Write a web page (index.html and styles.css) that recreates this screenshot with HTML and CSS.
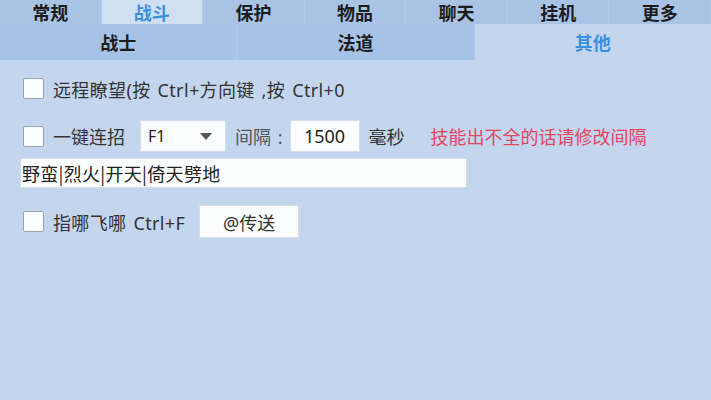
FILE: index.html
```html
<!DOCTYPE html>
<html lang="zh">
<head>
<meta charset="utf-8">
<link rel="stylesheet" href="styles.css">
</head>
<body>
<div class="tabs">
  <div class="tab">常规</div>
  <div class="tab active">战斗</div>
  <div class="tab">保护</div>
  <div class="tab">物品</div>
  <div class="tab">聊天</div>
  <div class="tab">挂机</div>
  <div class="tab">更多</div>
</div>
<div class="subtabs">
  <div class="subtab">战士</div>
  <div class="subtab">法道</div>
  <div class="subtab active">其他</div>
</div>
<div class="panel">
  <div class="row row1">
    <span class="check"></span>
    <span class="label">远程瞭望(按 Ctrl+方向键 ,按 Ctrl+0</span>
  </div>
  <div class="row row2">
    <span class="check"></span>
    <span class="label">一键连招</span>
    <div class="select"><span>F1</span><span class="caret"></span></div>
    <span class="label gray">间隔 :</span>
    <div class="field num">1500</div>
    <span class="label">毫秒</span>
    <span class="warn">技能出不全的话请修改间隔</span>
  </div>
  <div class="row row3">
    <div class="field wide">野蛮|烈火|开天|倚天劈地</div>
  </div>
  <div class="row row4">
    <span class="check"></span>
    <span class="label">指哪飞哪 Ctrl+F</span>
    <div class="btn">@传送</div>
  </div>
</div>
</body>
</html>
```
FILE: styles.css
```css
* { box-sizing: border-box; }
html, body {
  margin: 0;
  height: 100%;
}
body {
  background: #c3d6ee;
  font-family: "Noto Sans", "Noto Sans CJK SC", sans-serif;
  color: #333;
  overflow: hidden;
}
.tabs {
  display: flex;
  height: 24px;
  background: #a9c3e4;
}
.tab {
  flex: 1;
  display: flex;
  align-items: center;
  justify-content: center;
  font-family: "Noto Sans CJK SC", sans-serif;
  font-size: 18px;
  font-weight: bold;
  color: #1c1c1c;
  border-right: 1px solid #b3cae8;
}
.tab.active {
  background: #d0e0f2;
  color: #3d8fe0;
}
.subtabs {
  display: flex;
  height: 36px;
}
.subtab {
  flex: 1;
  display: flex;
  align-items: center;
  justify-content: center;
  background: #a6c2e6;
  font-family: "Noto Sans CJK SC", sans-serif;
  font-size: 18px;
  font-weight: bold;
  color: #1c1c1c;
  border-right: 1px solid #b2c9e8;
}
.subtab.active {
  background: #c3d6ee;
  color: #3d8fe0;
  border-right: 0;
}
.panel {
  padding: 18px 0 0 20px;
  display: flex;
  flex-direction: column;
}
.row {
  display: flex;
  align-items: center;
}
.row1 { height: 21px; }
.row2 { height: 32px; margin-top: 21px; }
.row3 { height: 30px; margin-top: 6px; }
.row4 { height: 33px; margin-top: 17px; }
.check {
  width: 21px;
  height: 21px;
  margin-left: 3px;
  margin-right: 9px;
  background: #fbfcfe;
  border: 1px solid #9aa3b0;
  border-radius: 2px;
  flex: none;
}
.label {
  font-size: 18px;
  color: #333;
  white-space: nowrap;
  word-spacing: 2px;
  letter-spacing: 0.35px;
}
.row2 .label { letter-spacing: 0; }
.label.gray { color: #505560; }
.select {
  width: 86px;
  height: 32px;
  margin-left: 15px;
  margin-right: 9px;
  background: #fbfcfe;
  border: 1px solid #d4dde8;
  display: flex;
  align-items: center;
  justify-content: space-between;
  padding: 0 13px 0 7px;
  font-size: 16px;
  color: #222;
}
.caret {
  width: 0;
  height: 0;
  border-left: 6px solid transparent;
  border-right: 6px solid transparent;
  border-top: 7px solid #555;
}
.field {
  background: #fdfeff;
  border: 1px solid #d4dde8;
  display: flex;
  align-items: center;
  font-size: 18px;
  color: #222;
}
.num {
  width: 70px;
  height: 32px;
  margin-left: 7px;
  margin-right: 9px;
  justify-content: center;
}
.wide {
  width: 447px;
  height: 30px;
  padding-left: 1px;
  font-family: "Noto Sans CJK SC", sans-serif;
  letter-spacing: 0.3px;
}
.warn {
  margin-left: 26px;
  font-size: 18px;
  color: #e6435c;
  white-space: nowrap;
}
.btn {
  width: 100px;
  height: 33px;
  margin-left: 14px;
  background: #fdfeff;
  border: 1px solid #d4dde8;
  display: flex;
  align-items: center;
  justify-content: center;
  font-size: 18px;
  color: #333;
}
```
